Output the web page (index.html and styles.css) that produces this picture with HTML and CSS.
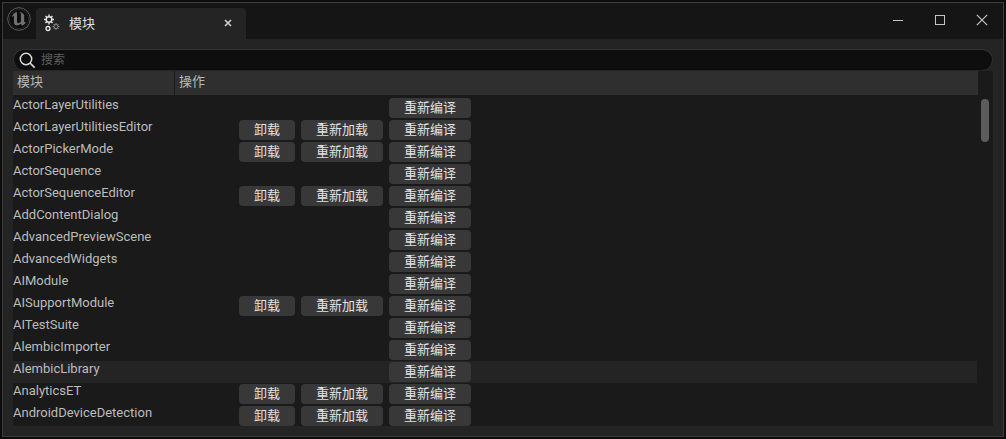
FILE: index.html
```html
<!DOCTYPE html>
<html lang="zh">
<head>
<meta charset="utf-8">
<title>模块</title>
<link rel="stylesheet" href="styles.css">
</head>
<body>
<div class="window">
  <header class="titlebar">
    <svg class="logo" width="24" height="24" viewBox="0 0 24 24">
      <circle cx="12" cy="12" r="11.3" fill="#0c0c0c" stroke="#5e5e5e" stroke-width="1"/>
      <circle cx="12" cy="12" r="9.6" fill="none" stroke="#262626" stroke-width="1"/>
      <path d="M9.6 4.8 C7.2 5.8 5.2 7.8 4.8 10.2 L6.9 8.6 L6.9 15.2 C6.9 17.4 8.4 18.4 10.2 18.4 C11.6 18.4 12.6 17.8 13.4 16.8 L15.4 18.8 C17.2 17.8 18.6 16.4 19.4 14.6 L18 15.4 L17.2 14.7 L17.2 8.2 C16.2 6.4 14.8 5.4 12.6 4.6 L13.9 6.4 L13.9 15 L11.4 16.2 C10.6 16.2 10 15.6 10 14.8 L10 6.4 Z" fill="#707070"/>
    </svg>
    <div class="tab">
      <svg class="tab-icon" width="20" height="20" viewBox="0 0 20 20" fill="none">
        <g stroke="#e4e4e4" stroke-width="1.4">
          <circle cx="7" cy="6.5" r="2.8"/>
          <path d="M7 1.5v2M7 9.5v2M2 6.5h2M10 6.5h2M3.5 3l1.4 1.4M9.1 8.6l1.4 1.4M3.5 10l1.4-1.4M9.1 4.4l1.4-1.4"/>
          <circle cx="6" cy="15.5" r="2" stroke-width="1.3"/>
        </g>
        <g stroke="#8a8a8a" stroke-width="1">
          <circle cx="14" cy="13.5" r="2"/>
          <path d="M14 10v1.5M14 15.5v1.5M10.5 13.5h1.5M16 13.5h1.5M11.5 11l1 1M15.5 15l1 1M11.5 16l1-1M15.5 12l1-1"/>
        </g>
      </svg>
      <span class="tab-title">模块</span>
      <svg class="tab-close" width="8" height="8" viewBox="0 0 8 8"><path d="M1 1l6 6M7 1l-6 6" stroke="#d0d0d0" stroke-width="1.6"/></svg>
    </div>
    <div class="win-controls">
      <svg width="12" height="12" viewBox="0 0 12 12"><path d="M1 6.5h10" stroke="#c4c4c4" stroke-width="1"/></svg>
      <svg width="12" height="12" viewBox="0 0 12 12"><rect x="1.5" y="1.5" width="9" height="9" fill="none" stroke="#c4c4c4" stroke-width="1"/></svg>
      <svg width="12" height="12" viewBox="0 0 12 12"><path d="M.8.8l10.4 10.4M11.2.8L.8 11.2" stroke="#c4c4c4" stroke-width="1.2"/></svg>
    </div>
  </header>
  <main class="content">
    <div class="search">
      <svg width="17" height="17" viewBox="0 0 17 17" fill="none"><circle cx="7" cy="7" r="5.7" stroke="#dcdcdc" stroke-width="1.5"/><path d="M11 11l4.6 4.6" stroke="#dcdcdc" stroke-width="1.7"/></svg>
      <span class="search-text">搜索</span>
    </div>
    <div class="table">
      <div class="table-main">
        <div class="thead">
          <div class="th th-name">模块</div>
          <div class="th">操作</div>
        </div>
        <div class="rows">
          <div class="row"><span class="name">ActorLayerUtilities</span><button class="btn col-re">重新编译</button></div>
          <div class="row"><span class="name">ActorLayerUtilitiesEditor</span><button class="btn">卸载</button><button class="btn">重新加载</button><button class="btn">重新编译</button></div>
          <div class="row"><span class="name">ActorPickerMode</span><button class="btn">卸载</button><button class="btn">重新加载</button><button class="btn">重新编译</button></div>
          <div class="row"><span class="name">ActorSequence</span><button class="btn col-re">重新编译</button></div>
          <div class="row"><span class="name">ActorSequenceEditor</span><button class="btn">卸载</button><button class="btn">重新加载</button><button class="btn">重新编译</button></div>
          <div class="row"><span class="name">AddContentDialog</span><button class="btn col-re">重新编译</button></div>
          <div class="row"><span class="name">AdvancedPreviewScene</span><button class="btn col-re">重新编译</button></div>
          <div class="row"><span class="name">AdvancedWidgets</span><button class="btn col-re">重新编译</button></div>
          <div class="row"><span class="name">AIModule</span><button class="btn col-re">重新编译</button></div>
          <div class="row"><span class="name">AISupportModule</span><button class="btn">卸载</button><button class="btn">重新加载</button><button class="btn">重新编译</button></div>
          <div class="row"><span class="name">AITestSuite</span><button class="btn col-re">重新编译</button></div>
          <div class="row"><span class="name">AlembicImporter</span><button class="btn col-re">重新编译</button></div>
          <div class="row row-hover"><span class="name">AlembicLibrary</span><button class="btn col-re">重新编译</button></div>
          <div class="row"><span class="name">AnalyticsET</span><button class="btn">卸载</button><button class="btn">重新加载</button><button class="btn">重新编译</button></div>
          <div class="row"><span class="name">AndroidDeviceDetection</span><button class="btn">卸载</button><button class="btn">重新加载</button><button class="btn">重新编译</button></div>
        </div>
      </div>
      <div class="scroll-track"><div class="scroll-thumb"></div></div>
    </div>
  </main>
</div>
</body>
</html>
```
FILE: styles.css
```css
* { box-sizing: border-box; }
html, body { margin: 0; height: 100%; }
body {
  background: #0c0c0c;
  padding: 2px;
  font-family: Roboto, "Noto Sans CJK SC", sans-serif;
  overflow: hidden;
}
.window {
  height: 435px;
  border: 1px solid #3c3c3c;
  display: flex;
  flex-direction: column;
  background: #242424;
}
.titlebar {
  height: 36px;
  flex: none;
  background: #151515;
  display: flex;
  align-items: flex-end;
  position: relative;
}
.logo { position: absolute; left: 4px; top: 4px; }
.tab {
  margin-left: 33px;
  width: 210px;
  height: 31px;
  background: #242424;
  border-radius: 4px 4px 0 0;
  display: flex;
  align-items: center;
  padding-left: 6px;
  padding-bottom: 2px;
}
.tab-icon { flex: none; }
.tab-title {
  margin-left: 7px;
  font: 13px "Noto Sans CJK SC", sans-serif;
  color: #e0e0e0;
}
.tab-close { margin-left: auto; margin-right: 14px; }
.win-controls {
  margin-left: auto;
  align-self: center;
  display: flex;
  gap: 30px;
  padding-right: 15px;
  margin-bottom: 2px;
}
.content {
  flex: 1;
  min-height: 0;
  padding: 10px;
  display: flex;
  flex-direction: column;
}
.search {
  height: 21px;
  flex: none;
  background: #0e0e0e;
  border: 1px solid #333;
  border-bottom: 0;
  border-radius: 11px;
  display: flex;
  align-items: center;
  padding-left: 5px;
  margin-bottom: 1px;
}
.search-text {
  margin-left: 5px;
  font: 12px "Noto Sans CJK SC", sans-serif;
  color: #5e5e5e;
  padding-bottom: 3px;
}
.table { flex: 1; min-height: 0; display: flex; overflow: hidden; background: #1a1a1a; }
.table-main { flex: 1; min-width: 0; }
.thead {
  height: 24px;
  background: #2f2f2f;
  display: flex;
  margin-bottom: 2px;
}
.th {
  font: 13px/20px "Noto Sans CJK SC", sans-serif;
  color: #b8b8b8;
  padding-left: 4px;
}
.th-name { width: 162px; border-right: 1px solid #1c1c1c; }
.row {
  height: 22px;
  display: grid;
  grid-template-columns: 220px 56px 82px 82px;
  column-gap: 6px;
  align-items: center;
}
.row-hover { background: #242424; margin-right: 1px; }
.name {
  font-size: 13px;
  line-height: 15px;
  align-self: start;
  color: #bcbcbc;
}
.btn {
  height: 20px;
  padding: 0 0 2px;
  border: 0;
  border-radius: 4px;
  background: #383838;
  color: #e2e2e2;
  font: 13px/18px "Noto Sans CJK SC", sans-serif;
}
.col-re { grid-column: 4; }
.scroll-track { width: 15px; flex: none; background: #1a1a1a; padding: 28px 3px 0 3px; }
.scroll-thumb { height: 43px; width: 8px; background: #5c5c5c; border-radius: 4px; }
```
